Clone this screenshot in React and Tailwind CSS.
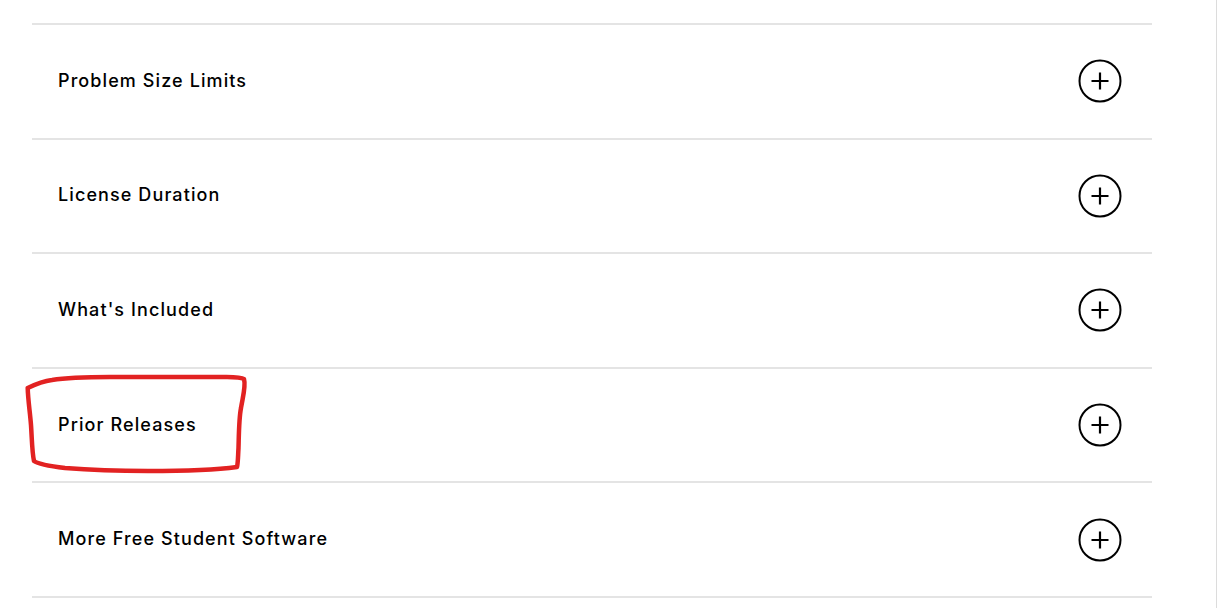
import React from "react";

const items = [
  "Problem Size Limits",
  "License Duration",
  "What's Included",
  "Prior Releases",
  "More Free Student Software",
];

function PlusCircle() {
  return (
    <svg width="44" height="44" viewBox="0 0 44 44" fill="none">
      <circle cx="22" cy="22" r="20.5" stroke="#000" strokeWidth="2" />
      <path d="M22 13.5v17M13.5 22h17" stroke="#000" strokeWidth="2.2" />
    </svg>
  );
}

export default function App() {
  return (
    <div className="relative flex h-[608px] w-full bg-white" style={{ fontFamily: "Inter, 'Open Sans', sans-serif" }}>
      <div className="ml-[32px] mt-[23px] w-[1120px]">
        {items.map((title) => (
          <div
            key={title}
            className="flex h-[114.6px] items-center justify-between border-t-2 border-[#e4e4e4] pl-[26px] pr-[30px]"
          >
            <span className="pb-[2px] text-[18px] font-medium tracking-[1.1px] text-black">{title}</span>
            <PlusCircle />
          </div>
        ))}
        <div className="border-t-2 border-[#e4e4e4]" />
      </div>
      <div className="ml-auto mr-[1px] w-px bg-[#dcdcdc]" />

      {/* red hand-drawn annotation */}
      <svg className="pointer-events-none absolute left-0 top-0" width="1218" height="608">
        <path
          d="M27.7 388 C36 384 44 381 52 380 C70 377 90 377 110 377 L215 377 C228 377 240 376 244 379 C246 386 243 396 241 408 C239 418 239 430 238.5 448 C238 456 238 463 237 467 C215 470 180 471 148 471 C120 471 90 470 65 468 C48 466 38 464 34 461 C32 452 32 440 31 425 C30 412 28 400 27.7 388"
          stroke="#e22222"
          strokeWidth="4.5"
          fill="none"
          strokeLinecap="round"
          strokeLinejoin="round"
        />
      </svg>
    </div>
  );
}
